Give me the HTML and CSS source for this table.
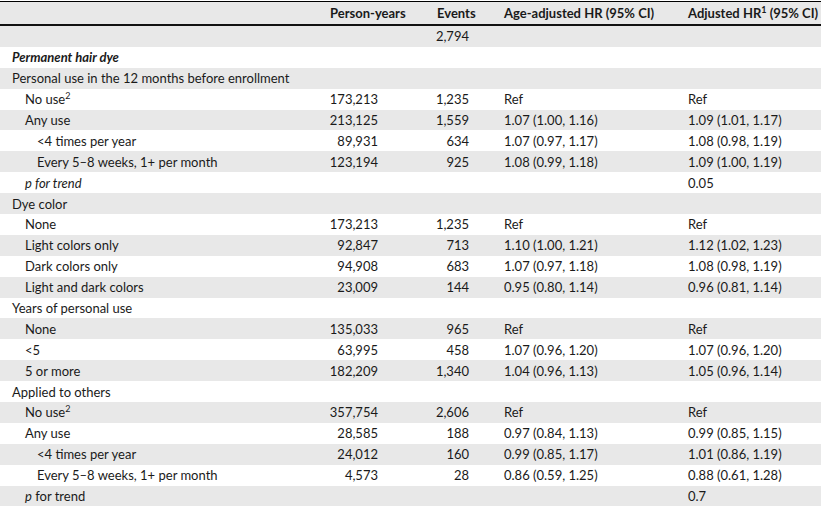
FILE: index.html
```html
<!DOCTYPE html>
<html lang="en">
<head>
<meta charset="utf-8">
<title>Hair dye table</title>
<link rel="stylesheet" href="styles.css">
</head>
<body>
<div class="table">
  <div class="row head">
    <div class="c lab"></div>
    <div class="c py">Person-years</div>
    <div class="c ev">Events</div>
    <div class="c age">Age-adjusted HR (95% CI)</div>
    <div class="c adj">Adjusted HR<sup>1</sup> (95% CI)</div>
  </div>
  <div class="row alt"><div class="c lab"></div><div class="c py num"></div><div class="c ev num">2,794</div><div class="c age"></div><div class="c adj"></div></div>
  <div class="row"><div class="c lab bi">Permanent hair dye</div><div class="c py num"></div><div class="c ev num"></div><div class="c age"></div><div class="c adj"></div></div>
  <div class="row alt"><div class="c lab">Personal use in the 12 months before enrollment</div><div class="c py num"></div><div class="c ev num"></div><div class="c age"></div><div class="c adj"></div></div>
  <div class="row"><div class="c lab l1">No use<sup>2</sup></div><div class="c py num">173,213</div><div class="c ev num">1,235</div><div class="c age">Ref</div><div class="c adj">Ref</div></div>
  <div class="row alt"><div class="c lab l1">Any use</div><div class="c py num">213,125</div><div class="c ev num">1,559</div><div class="c age">1.07 (1.00, 1.16)</div><div class="c adj">1.09 (1.01, 1.17)</div></div>
  <div class="row"><div class="c lab l2">&lt;4 times per year</div><div class="c py num">89,931</div><div class="c ev num">634</div><div class="c age">1.07 (0.97, 1.17)</div><div class="c adj">1.08 (0.98, 1.19)</div></div>
  <div class="row alt"><div class="c lab l2">Every 5–8 weeks, 1+ per month</div><div class="c py num">123,194</div><div class="c ev num">925</div><div class="c age">1.08 (0.99, 1.18)</div><div class="c adj">1.09 (1.00, 1.19)</div></div>
  <div class="row"><div class="c lab l1 it">p for trend</div><div class="c py num"></div><div class="c ev num"></div><div class="c age"></div><div class="c adj">0.05</div></div>
  <div class="row alt"><div class="c lab">Dye color</div><div class="c py num"></div><div class="c ev num"></div><div class="c age"></div><div class="c adj"></div></div>
  <div class="row"><div class="c lab l1">None</div><div class="c py num">173,213</div><div class="c ev num">1,235</div><div class="c age">Ref</div><div class="c adj">Ref</div></div>
  <div class="row alt"><div class="c lab l1">Light colors only</div><div class="c py num">92,847</div><div class="c ev num">713</div><div class="c age">1.10 (1.00, 1.21)</div><div class="c adj">1.12 (1.02, 1.23)</div></div>
  <div class="row"><div class="c lab l1">Dark colors only</div><div class="c py num">94,908</div><div class="c ev num">683</div><div class="c age">1.07 (0.97, 1.18)</div><div class="c adj">1.08 (0.98, 1.19)</div></div>
  <div class="row alt"><div class="c lab l1">Light and dark colors</div><div class="c py num">23,009</div><div class="c ev num">144</div><div class="c age">0.95 (0.80, 1.14)</div><div class="c adj">0.96 (0.81, 1.14)</div></div>
  <div class="row"><div class="c lab">Years of personal use</div><div class="c py num"></div><div class="c ev num"></div><div class="c age"></div><div class="c adj"></div></div>
  <div class="row alt"><div class="c lab l1">None</div><div class="c py num">135,033</div><div class="c ev num">965</div><div class="c age">Ref</div><div class="c adj">Ref</div></div>
  <div class="row"><div class="c lab l1">&lt;5</div><div class="c py num">63,995</div><div class="c ev num">458</div><div class="c age">1.07 (0.96, 1.20)</div><div class="c adj">1.07 (0.96, 1.20)</div></div>
  <div class="row alt"><div class="c lab l1">5 or more</div><div class="c py num">182,209</div><div class="c ev num">1,340</div><div class="c age">1.04 (0.96, 1.13)</div><div class="c adj">1.05 (0.96, 1.14)</div></div>
  <div class="row"><div class="c lab">Applied to others</div><div class="c py num"></div><div class="c ev num"></div><div class="c age"></div><div class="c adj"></div></div>
  <div class="row alt"><div class="c lab l1">No use<sup>2</sup></div><div class="c py num">357,754</div><div class="c ev num">2,606</div><div class="c age">Ref</div><div class="c adj">Ref</div></div>
  <div class="row"><div class="c lab l1">Any use</div><div class="c py num">28,585</div><div class="c ev num">188</div><div class="c age">0.97 (0.84, 1.13)</div><div class="c adj">0.99 (0.85, 1.15)</div></div>
  <div class="row alt"><div class="c lab l2">&lt;4 times per year</div><div class="c py num">24,012</div><div class="c ev num">160</div><div class="c age">0.99 (0.85, 1.17)</div><div class="c adj">1.01 (0.86, 1.19)</div></div>
  <div class="row"><div class="c lab l2">Every 5–8 weeks, 1+ per month</div><div class="c py num">4,573</div><div class="c ev num">28</div><div class="c age">0.86 (0.59, 1.25)</div><div class="c adj">0.88 (0.61, 1.28)</div></div>
  <div class="row alt"><div class="c lab l1"><i>p</i> for trend</div><div class="c py num"></div><div class="c ev num"></div><div class="c age"></div><div class="c adj">0.7</div></div>
</div>
</body>
</html>
```

FILE: styles.css
```css
html, body {
  margin: 0;
  padding: 0;
  background: #fff;
}
body {
  font-family: "Lato", "Noto Sans", sans-serif;
  font-size: 13px;
  color: #1a1a1a;
}
.table {
  padding-top: 1px;
  width: 821px;
}
.row {
  display: grid;
  grid-template-columns: 318px 107px 67px 184px 145px;
  height: 20.9px;
  align-items: center;
  white-space: nowrap;
}
.row.alt {
  background: #e8e8e8;
}
.row.head {
  height: 22px;
  background: #e8e8e8;
  border-top: 1px solid #000;
  border-bottom: 2px solid #111;
  font-weight: 700;
}
.c {
  padding-left: 12px;
  line-height: 16px;
}
.num {
  text-align: right;
  padding-left: 0;
}
.py.num { padding-right: 47px; }
.ev.num { padding-right: 23px; }
.l1 { padding-left: 25px; }
.l2 { padding-left: 37px; }
.bi {
  font-weight: 700;
  font-style: italic;
}
.it { font-style: italic; }
sup {
  font-size: 9px;
  line-height: 0;
  vertical-align: 5px;
}
```
